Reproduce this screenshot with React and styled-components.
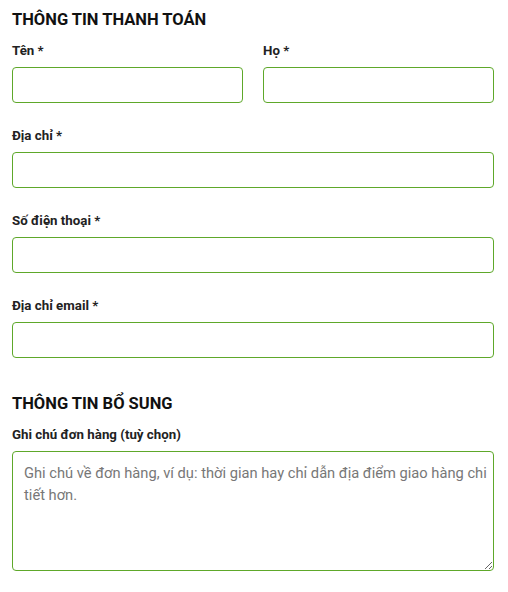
import React from "react";
import styled, { createGlobalStyle } from "styled-components";

const Global = createGlobalStyle`
  html, body { margin: 0; padding: 0; background: #fff; }
  body { font-family: Roboto, "Noto Sans", Arial, sans-serif; }
  * { box-sizing: border-box; }
`;

const Page = styled.div`
  padding: 10px 14px 20px 12px;
  width: 508px;
`;

const Section = styled.section`
  & + & { margin-top: 36px; }
`;

const Heading = styled.h3`
  margin: 0 0 11px;
  font-size: 16.5px;
  line-height: 20px;
  font-weight: 700;
  text-transform: uppercase;
  color: #111;
`;

const Row = styled.div`
  display: grid;
  grid-template-columns: ${(p) => (p.$cols === 2 ? "1fr 1fr" : "1fr")};
  column-gap: 20px;
`;

const Field = styled.div`
  display: flex;
  flex-direction: column;
  margin-bottom: ${(p) => (p.$last ? "0" : "23px")};
`;

const Label = styled.label`
  font-size: 13.3px;
  line-height: 20px;
  font-weight: 700;
  color: #222;
  margin-bottom: 6px;
`;

const Input = styled.input`
  height: 36px;
  width: 100%;
  border: 1px solid #5ea82a;
  border-radius: 4px;
  padding: 0 11px;
  font: inherit;
  font-size: 15px;
  background: #fff;
  outline: none;
`;

const TextArea = styled.textarea`
  width: 100%;
  height: 120px;
  border: 1px solid #5ea82a;
  border-radius: 4px;
  padding: 10px 4px 10px 11px;
  font-family: Roboto, "Noto Sans", Arial, sans-serif;
  font-size: 14.7px;
  line-height: 22px;
  color: #333;
  background: #fff;
  outline: none;
  display: block;
  &::placeholder { color: #777; opacity: 1; }
`;

export default function App() {
  return (
    <>
      <Global />
      <Page>
        <Section>
          <Heading>Thông tin thanh toán</Heading>
          <Row $cols={2}>
            <Field>
              <Label>Tên *</Label>
              <Input type="text" />
            </Field>
            <Field>
              <Label>Họ *</Label>
              <Input type="text" />
            </Field>
          </Row>
          <Field>
            <Label>Địa chỉ *</Label>
            <Input type="text" />
          </Field>
          <Field>
            <Label>Số điện thoại *</Label>
            <Input type="tel" />
          </Field>
          <Field $last>
            <Label>Địa chỉ email *</Label>
            <Input type="email" />
          </Field>
        </Section>
        <Section>
          <Heading>Thông tin bổ sung</Heading>
          <Field $last>
            <Label>Ghi chú đơn hàng (tuỳ chọn)</Label>
            <TextArea placeholder="Ghi chú về đơn hàng, ví dụ: thời gian hay chỉ dẫn địa điểm giao hàng chi tiết hơn." />
          </Field>
        </Section>
      </Page>
    </>
  );
}
